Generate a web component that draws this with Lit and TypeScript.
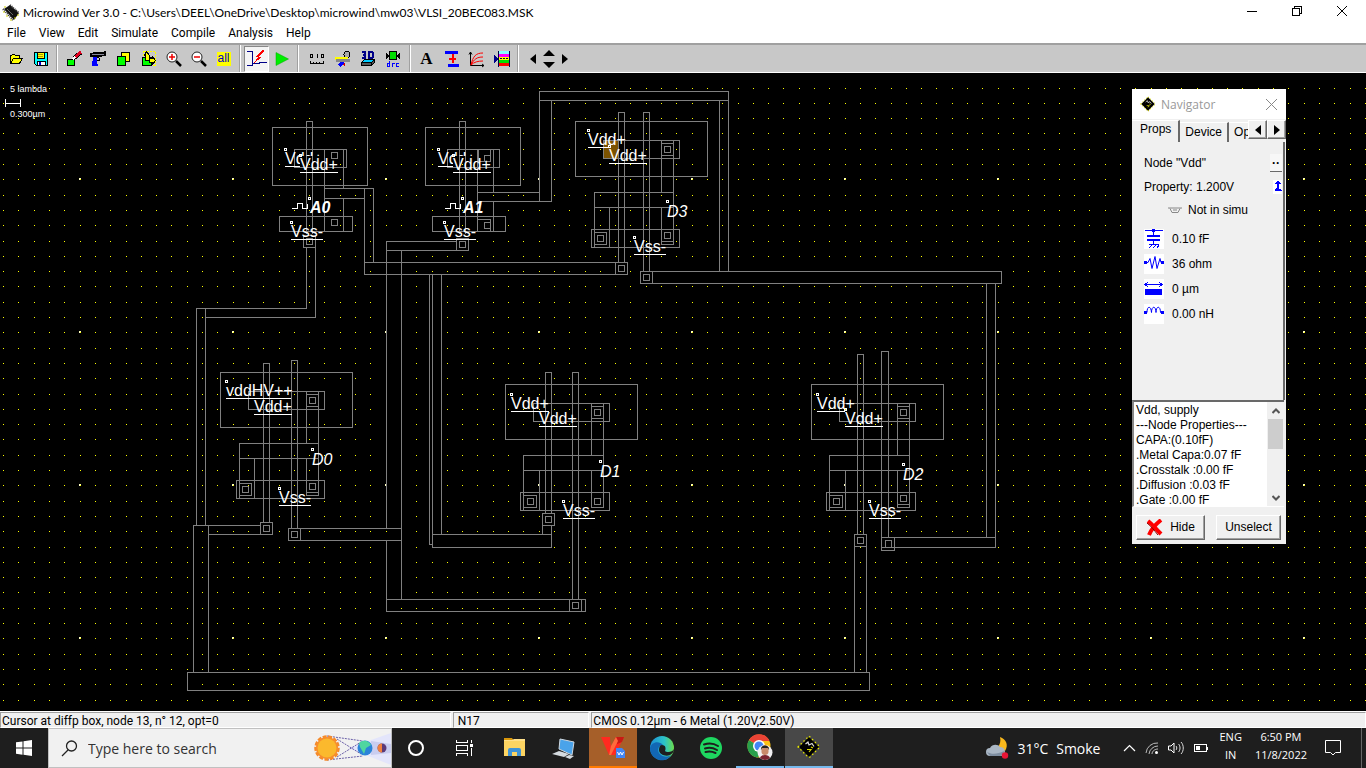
import { LitElement, html, svg, css, nothing } from "lit";
import { customElement, state } from "lit/decorators.js";
import { classMap } from "lit/directives/class-map.js";

/* ---------- layout data ---------- */

type Box = [number, number, number, number];

const boxPath = ([x, y, x2, y2]: Box) =>
  `M${x + 0.5} ${y + 0.5}H${x2 + 0.5}V${y2 + 0.5}H${x + 0.5}z`;
const h = (y: number, x: number, x2: number) => `M${x} ${y + 0.5}H${x2 + 1}`;
const v = (x: number, y: number, y2: number) => `M${x + 0.5} ${y}V${y2 + 1}`;

const inverter = (x: number, shift: number) => [
  boxPath([x, 127, x + 95, 185]),
  `M${x + 34.5} 234V121.5H${x + 40.5}V234`,
  boxPath([x + 22, 149, x + 74, 167]),
  boxPath([x + 59, 152 + shift, x + 65, 158 + shift]),
  v(x + 52, 149, 231),
  boxPath([x + 7, 216, x + 80, 231]),
  boxPath([x + 59, 219 + shift, x + 65, 225 + shift]),
];

const gate = (x: number, y: number, lift = 0, arm = 0) => [
  boxPath([x, y, x + 132, y + 55]),
  boxPath([x + 28, y + 19, x + 104, y + 37]),
  boxPath([x + 86, y + 22, x + 98, y + 34]),
  boxPath([x + 89, y + 25, x + 95, y + 31]),
  v(x + 86, y + 19, y + 71),
  v(x + 98, y + 19, y + 123),
  h(y + 71, x + 18 + arm, x + 98),
  h(y + 86, x + 18 + arm, x + 98),
  v(x + 18 + arm, y + 71, y + 126),
  v(x + 34, y + 86, y + 126),
  v(x + 86, y + 86, y + 123),
  boxPath([x + 15 + arm, y + 108, x + 104, y + 126]),
  boxPath([x + 18 + arm, y + 111, x + 31, y + 123]),
  boxPath([x + 22, y + 114, x + 28, y + 120]),
  h(y + 123, x + 86, x + 98),
  h(y + 123 - lift, x + 86, x + 98),
  boxPath([x + 89, y + 114 - lift, x + 95, y + 120 - lift]),
];

const column = (x: number, x2: number, top: number, bottom: number) =>
  `M${x + 0.5} ${bottom}V${top + 0.5}H${x2 + 0.5}V${bottom}`;

const via = (x: number, y: number) => [
  boxPath([x, y, x + 12, y + 12]),
  boxPath([x + 3, y + 3, x + 9, y + 9]),
];

const wires = [
  ...inverter(272, 0),
  v(343, 149, 188), v(343, 198, 231),
  ...inverter(425, 3),
  v(493, 149, 192), v(493, 201, 231),
  ...gate(575, 121, 3, 1), ...gate(220, 372, 3, 1), ...gate(505, 384), ...gate(811, 384, 3),
  boxPath([478, 149, 490, 161]), boxPath([477, 219, 490, 231]),
  column(618, 624, 112, 262), column(643, 649, 112, 271),
  column(263, 269, 363, 522), column(291, 297, 360, 528),
  column(545, 551, 372, 513), column(572, 578, 372, 599),
  column(857, 863, 354, 534), column(881, 888, 351, 537),
  ...via(303, 235), ...via(456, 238), ...via(615, 262), ...via(640, 271),
  ...via(260, 522), ...via(288, 528), ...via(542, 513), ...via(569, 599),
  ...via(854, 534), boxPath([881, 537, 894, 550]), boxPath([885, 540, 891, 547]),
  h(188, 324, 373), h(198, 324, 364), v(364, 188, 274), v(373, 188, 262),
  h(262, 364, 615), h(274, 364, 615),
  v(306, 247, 308), v(315, 247, 317), h(308, 196, 306), h(317, 205, 315),
  v(196, 308, 525), v(205, 308, 525),
  h(525, 193, 260), h(534, 208, 260), v(193, 525, 672), v(208, 525, 672),
  boxPath([187, 672, 869, 690]),
  h(192, 477, 539), h(201, 477, 551), v(539, 91, 201), v(551, 100, 201),
  h(91, 539, 728), h(100, 539, 728), v(719, 100, 271), v(728, 91, 271),
  h(241, 386, 456), h(250, 386, 456), v(401, 250, 599),
  v(386, 241, 528), v(386, 540, 611),
  h(528, 300, 401), h(540, 300, 401),
  h(599, 386, 585), h(611, 386, 585), v(585, 599, 611),
  v(429, 274, 544), h(544, 429, 432), v(432, 274, 547), v(441, 274, 534),
  h(534, 432, 551), h(547, 432, 551), v(542, 525, 534), v(551, 525, 547),
  h(271, 652, 1001), h(283, 652, 1001), v(1001, 271, 283),
  v(986, 283, 537), v(995, 283, 547), h(537, 894, 995), h(547, 881, 995),
  v(854, 546, 672), v(866, 546, 672),
].join("");

interface Label { x: number; y: number; text: string; w?: number; kind?: string; dot?: [number, number] }

const lowerLabels: Label[] = [
  { x: 285, y: 164, text: "Vdd+", w: 38, dot: [285, 149] },
  { x: 438, y: 164, text: "Vdd+", w: 38, dot: [438, 149] },
  { x: 588, y: 145, text: "Vdd+", w: 38, dot: [588, 130] },
  { x: 226, y: 396, text: "vddHV++", w: 65, dot: [226, 381] },
  { x: 511, y: 409, text: "Vdd+", w: 38, dot: [511, 394] },
  { x: 817, y: 409, text: "Vdd+", w: 38, dot: [817, 394] },
];
const covered: Box[] = [[300, 156, 338, 173], [453, 156, 491, 173], [609, 147, 647, 164], [845, 410, 883, 427]];
const openArea = "M0 0H2000V1200H0z" + covered.map(([x, y, x2, y2]) => `M${x} ${y}H${x2}V${y2}H${x}z`).join("");

const labels: Label[] = [
  { x: 300, y: 170, text: "Vdd+", w: 38, dot: [300, 155] },
  { x: 453, y: 170, text: "Vdd+", w: 38, dot: [453, 155] },
  { x: 609, y: 161, text: "Vdd+", w: 38, dot: [609, 146] },
  { x: 254, y: 412, text: "Vdd+", w: 38 },
  { x: 539, y: 424, text: "Vdd+", w: 38 },
  { x: 845, y: 424, text: "Vdd+", w: 38, dot: [845, 409] },
  { x: 291, y: 237, text: "Vss-", w: 32, dot: [291, 222] },
  { x: 444, y: 237, text: "Vss-", w: 32, dot: [444, 222] },
  { x: 634, y: 252, text: "Vss-", w: 32, dot: [634, 237] },
  { x: 279, y: 503, text: "Vss-", w: 32, dot: [279, 488] },
  { x: 563, y: 516, text: "Vss-", w: 32, dot: [563, 501] },
  { x: 869, y: 516, text: "Vss-", w: 32, dot: [869, 501] },
  { x: 310, y: 213, text: "A0", kind: "clock", dot: [309, 198] },
  { x: 463, y: 213, text: "A1", kind: "clock", dot: [462, 198] },
  { x: 667, y: 217, text: "D3", kind: "probe", dot: [667, 201] },
  { x: 312, y: 465, text: "D0", kind: "probe", dot: [312, 449] },
  { x: 600, y: 477, text: "D1", kind: "probe", dot: [600, 461] },
  { x: 903, y: 480, text: "D2", kind: "probe", dot: [903, 464] },
];

const gridDots = (() => {
  let minor = "";
  let major = "";
  for (let i = -15; i < 112; i++) {
    for (let j = -6; j < 60; j++) {
      const x = Math.round(232.65 + 15.3 * i);
      const y = Math.round(179.3 + 15.3 * j);
      minor += `M${x} ${y}h1v1h-1z`;
      if (i % 10 === 0 && j % 10 === 0) major += `M${x - 1} ${y - 1}h2v1h-1v1h-1z`;
    }
  }
  return { minor, major };
})();

/* ---------- icons ---------- */

const icon = (w: number, ht: number, body: unknown, crisp = true) => html`<svg
  class=${crisp ? "crisp" : "smooth"} width=${w} height=${ht} viewBox="0 0 ${w} ${ht}" aria-hidden="true">${body}</svg>`;

const chip = (size: number) => html`<svg width=${size} height=${size} viewBox="0 0 24 24" aria-hidden="true">
  <path d="M12 1.500 22.500 12 12 22.500 1.500 12z" fill="none" stroke="#e6e600" stroke-width="2" stroke-dasharray="1.500 2.500"/>
  <path d="M12 2 22 12 12 22 2 12z" fill="#000"/>
  <path d="M8.500 9 11 7l1 3 3-1.500 2 3" fill="none" stroke="#ddd" stroke-width="1.200"/>
  <path d="M10 14.500h4l-2 2.500M14 12l2 1" fill="none" stroke="#d8d800" stroke-width="1.200"/></svg>`;

const tool: Record<string, unknown> = {
  open: icon(16, 16, svg`<path d="M2.500 12.500v-8h1l1-1h2l1 1h4v3" fill="#ff0" stroke="#000"/><path d="M2.500 12.500 5.500 7.500h9l-3 5z" fill="#ff0" stroke="#000"/>`),
  save: icon(16, 16, svg`<path d="M1.500 1.500h13v13h-11l-2-2z" fill="#0ff" stroke="#000"/><path d="M4.500 1.500h7v6h-7z" fill="#ff0" stroke="#000"/><path d="M5 3h5v1H5zM5 5h5v1H5z" fill="#a90"/><path d="M4.500 10.500h8v4h-8z" fill="#fff" stroke="#000"/><path d="M6 11h2v3H6z" fill="#00c"/>`),
  draw: icon(16, 16, svg`<path d="M1.500 8.500h7v6h-7z" fill="#0f0" stroke="#000"/><path d="M8 7 15 1.500" stroke="#000" stroke-width="4"/><path d="M9.500 5.500 15 1" stroke="#e00020" stroke-width="3"/><path d="M6.500 8.500 9 6" stroke="#fff" stroke-width="2"/>`),
  gun: icon(18, 16, svg`<path d="M0 2h3V1h11V0h2v5h-4v1h-3v1H6v1H3V6H0z" fill="#000"/><path d="M2 3.500h12" stroke="#889"/><path d="M3 6h4v4l1 5H2z" fill="#00f"/><path d="M9.500 7v2.500H7" stroke="#000" fill="none"/>`),
  copy: icon(16, 16, svg`<path d="M5.500 1.500h8v9h-8z" fill="#ff0" stroke="#000"/><path d="M1.500 5.500h8v9h-8z" fill="#0f0" stroke="#000"/>`),
  stretch: icon(16, 16, svg`<path d="M2.500.500h12v14h-12z" fill="none" stroke="#ff0" stroke-dasharray="2 1"/><path d="M1.500 6.500h9v8h-9z" fill="#0f0" stroke="#000"/><path d="M3.500 4.500 5.500.500 8.500 4.500v5h-4v-5zM8.500 7.500h3v-2l3 4-3 4v-2h-3z" fill="#ff0" stroke="#000"/>`),
  zoomIn: icon(18, 18, svg`<circle cx="7" cy="7" r="5" fill="#fff" stroke="#222"/><path d="M4 7h6M7 4v6" stroke="#e00" stroke-width="1.500"/><path d="m11 11 5 5" stroke="#000" stroke-width="2.500"/>`, false),
  zoomOut: icon(18, 18, svg`<circle cx="7" cy="7" r="5" fill="#fff" stroke="#222"/><path d="M4 7h6" stroke="#e00" stroke-width="1.500"/><path d="m11 11 5 5" stroke="#000" stroke-width="2.500"/>`, false),
  mos: icon(20, 20, svg`<path d="M0 2.500h5v14H0M5 14.500h7v-1h8" stroke="#008" fill="none"/><path d="M16 1 8 8h3l-4 6 8-6h-3l5-6z" fill="#f00"/>`),
  play: icon(14, 14, svg`<path d="M1 .500 13.500 7 1 13.500z" fill="#0e0" stroke="#0a0" stroke-width=".5"/>`, false),
  ruler: icon(18, 12, svg`<path d="M1.500 1.500h2v3h-2zM8.500 1v4M7.500 1.500h1M12.500 1.500h2v3h-2zM1.500 8v2.500h13V8M4.500 9v1M7.500 9v1M10.500 9v1" stroke="#000" fill="none"/>`),
  cut: icon(16, 16, svg`<circle cx="12" cy="3.500" r="3" fill="#aaa" stroke="#000"/><path d="m6 11 4 3" stroke="#d00" stroke-width="2"/><path d="m4 15 4-4" stroke="#00f" stroke-width="3"/><path d="M0 6h13v3H0z" fill="#ff0"/><path d="M1 8h14v3H1z" fill="#888"/>`),
  d3: icon(16, 16, svg`<path d="M2 0h4v8H2V6h2V5H3V3h1V2H2zM8 0h4l2 2v4l-2 2H8zM10 2v4h1l1-1V3l-1-1z" fill="#008" fill-rule="evenodd"/><path d="M1.500 11.500 4.500 8.500h10l-3 3z" fill="#0cf" stroke="#000"/><path d="M1.500 11.500h10v3h-10zM11.500 11.500l3-3v3l-3 3z" fill="#555" stroke="#000"/>`),
  drc: icon(16, 18, svg`<path d="M4.500 1.500h7v8h-7z" fill="#0d0" stroke="#000"/><path d="M1 3l4 3-4 3zM15 3l-4 3 4 3z" fill="#000"/><path d="M2.500 13.500h2v3h-2zM4.500 11v6M7.500 17v-3.500h2M14 13.500h-2.500v3H14" fill="none" stroke="#00f"/>`),
  beam: icon(16, 16, svg`<path d="M1 0h13v3H1zM4 13h11v3H4z" fill="#00f"/><path d="M5 7.500h7M8.500 3v9" stroke="#f00" stroke-width="2"/>`),
  graph: icon(18, 18, svg`<path d="M2.500 2v13.500H16M1 4.500 2.500 2 4 4.500M14 14l2 1.500-2 1.500" fill="none" stroke="#000"/><path d="M3 15C5 6 8 3 15 3M3 15C6 9 9 7 15 7M3 15c3-3 7-4 12-4" fill="none" stroke="#f00"/>`, false),
  layers: icon(18, 16, svg`<path d="M6 0h10v3H6z" fill="#8ff"/><path d="M6 3h10v3H6z" fill="#f0f"/><path d="M6 6h10v3H6z" fill="#ff0"/><path d="M6 9h10v3H6z" fill="#0d0"/><path d="M6 12h10v3H6z" fill="#f00"/><path d="M5.500 0v16M16.500 0v16" stroke="#004"/><path d="M7 7.500h9" stroke="#004" stroke-dasharray="2 1"/><path d="m1 4 5 4-5 4z" fill="#008"/>`),
  left: icon(6, 10, svg`<path d="M6 0v10L0 5z"/>`, false),
  updown: icon(12, 20, svg`<path d="M0 7 6 1l6 6zM0 13h12l-6 6z"/>`, false),
  right: icon(6, 10, svg`<path d="M0 0v10l6-5z"/>`, false),
};

const prop: Record<string, unknown> = {
  cap: icon(20, 20, svg`<path d="M1 1.500h18M9.500 1v5M9.500 11v4M5 15.500h10M5 19l3-3M9 19l3-3M13 19l2-3" stroke="#00f" fill="none"/><path d="M3 6h13v2H3zM3 10h13v2H3zM8 0h3v3H8z" fill="#00f"/>`),
  res: icon(20, 20, svg`<path d="M1 8.500h3l2-4 2 10 3-12 2 12 3-10 1 4h3" stroke="#00f" fill="none"/><path d="M0 7h3v3H0zM17 7h3v3h-3z" fill="#00f"/>`, false),
  len: icon(20, 20, svg`<path d="M1 10h17v6H1z" fill="#00f"/><path d="M1 5.500h17M4 3 1 5.500 4 8M15 3l3 2.500L15 8" fill="none" stroke="#00f"/>`),
  ind: icon(20, 20, svg`<path d="M1 8.500h2c0-7 4-7 4.500 0 0-7 4.500-7 4.500 0 0-7 4.500-7 4.500 0h3" fill="none" stroke="#00f"/><path d="M0 7h3v3H0zM17 7h3v3h-3z" fill="#00f"/>`, false),
};

const app: Record<string, unknown> = {
  explorer: icon(24, 22, svg`<path d="M1 1h8l2 3H1z" fill="#d9970b"/><path d="M1 3h21v16H1z" fill="#fcd462"/><path d="M1 3h8l2-1h11v2H1z" fill="#ffe08a"/><path d="M5 19v-6a2 2 0 0 1 2-2h9a2 2 0 0 1 2 2v6h-4v-4H9v4z" fill="#3f93d6"/>`, false),
  pc: icon(26, 24, svg`<path d="m9 3 14 3-2 13-13-6z" fill="#4aa3ea" stroke="#cfd8e0"/><path d="m1 18 7-3 10 3-5 3zM14 21l4-2 5 1-4 3z" fill="#d5dbe0"/>`, false),
  wps: icon(28, 26, svg`<path d="M2 3h9l1 9 5-9h8l-9 18h-6z" fill="#ff2a20"/><path d="M11 3h3l1 5-3 5z" fill="#a65f29"/><path d="M17 3h8l-2 5-5 2z" fill="#c81a14"/><path d="M12 12 17 3l2 4-7 14h-2z" fill="#ff6a3c"/><path d="M17 14h6l3 3v7h-9z" fill="#4285f4"/><path d="m18.500 18 1.500 3 1.500-3 1.500 3 1.500-3" stroke="#fff" fill="none"/>`, false),
  edge: icon(26, 26, svg`<defs><linearGradient id="eg" x1="0" x2="1"><stop offset="0" stop-color="#1c8fd8"/><stop offset=".6" stop-color="#2cc3c8"/><stop offset="1" stop-color="#6bdc4c"/></linearGradient></defs><circle cx="13" cy="13" r="12" fill="url(#eg)"/><path d="M1 13c1-6 9-8 13-3-4 0-6 4-4 8 2 3 7 5 12 2-3 5-8 6-12 5C4 23 1 18 1 13z" fill="#1267b4"/><path d="M13 10c4 0 4 4 3 6 2 2 8 1 9-2 0 3-2 5-4 6-5 2-11-1-11-5 0-3 1-5 3-5z" fill="#1e1e1e"/>`, false),
  spotify: icon(24, 24, svg`<circle cx="12" cy="12" r="11" fill="#1ed760"/><path d="M5 8.500c5-1.500 10-1 14 1.500M6 12.500c4-1.300 8-.8 12 1.500M6.500 16c4-1 7-.5 10 1" fill="none" stroke="#1e1e1e" stroke-width="2" stroke-linecap="round"/>`, false),
  chrome: icon(28, 28, svg`<circle cx="13" cy="13" r="11.500" fill="#fbc116"/><path d="m13 13-10-6a11.500 11.500 0 0 0 9 17.500l5-9z" fill="#28a04c"/><path d="M3 7a11.500 11.500 0 0 1 20.500 1H13v5z" fill="#ea4335"/><circle cx="13" cy="13" r="6" fill="#fff"/><circle cx="13" cy="13" r="4.500" fill="#4285f4"/><circle cx="19" cy="19.500" r="7.500" fill="#f0eff1"/><path d="M15.500 16c0-5 7-5 7 0v3c0 4-7 4-7 0z" fill="#c98a6b"/><path d="M15 17c-1-6 9-6 8 0l-1-2h-6z" fill="#222"/><path d="M14 25c1-4 9-4 10 0-3 2.500-7 2.500-10 0z" fill="#7c2430"/>`, false),
};

/* ---------- layout canvas ---------- */

@customElement("layout-view")
class LayoutView extends LitElement {
  static styles = css`
    :host { display: block; overflow: hidden; background: #000; }
    svg { display: block; width: 100%; height: 100%; }
    .wires { fill: none; stroke: #808080; shape-rendering: crispEdges; }
    .crisp { shape-rendering: crispEdges; }
    .label { font: 16px "Liberation Sans", Arial, sans-serif; fill: #fff; }
    .probe { font-style: italic; }
    .clock { font-style: italic; font-weight: bold; }
    .scale { font: 9px "Liberation Sans", Arial, sans-serif; fill: #fff; }
    .line { fill: none; stroke: #fff; shape-rendering: crispEdges; }
  `;

  private label(l: Label) {
    return svg`<text class="label ${l.kind ?? ""}" x=${l.x} y=${l.y}>${l.text}</text>
      ${l.w ? svg`<path class="line" d="M${l.x} ${l.y + 2.5}h${l.w}"/>` : nothing}
      ${l.dot ? svg`<path class="line" d="M${l.dot[0] - 0.5} ${l.dot[1] - 0.5}h2v2h-2z"/>` : nothing}
      ${l.kind === "clock" ? svg`<path class="line" d="M${l.x - 18} 208.500h5v-5h5v5h5v-5"/>` : nothing}`;
  }

  render() {
    return html`<svg role="img" aria-label="Chip layout">
      <defs><clipPath id="open"><path clip-rule="evenodd" d=${openArea}/></clipPath></defs>
      <g transform="translate(0 -73)">
        <path class="crisp" d=${gridDots.minor} fill="#ff0"/>
        <path class="crisp" d=${gridDots.major} fill="#ffffc0"/>
        <rect x="603" y="140" width="15" height="18" fill="#7b5200"/>
        <path class="wires" d=${wires}/>
        <g clip-path="url(#open)">${lowerLabels.map((l) => this.label(l))}</g>
        ${labels.map((l) => this.label(l))}
        <text class="scale" x="10" y="92">5 lambda</text>
        <path class="line" d="M5.500 99v8M20.500 99v8M5 103.500h16"/>
        <text class="scale" x="10" y="117">0.300µm</text>
      </g>
    </svg>`;
  }
}

/* ---------- navigator window ---------- */

@customElement("navigator-window")
class NavigatorWindow extends LitElement {
  @state() private tab = "Props";

  static styles = css`
    :host { display: flex; flex-direction: column; width: 154px; height: 455px; box-sizing: border-box;
      background: #f0f0f0; color: #000; font: 12px/15px "Liberation Sans", Arial, sans-serif; }
    button { font: inherit; color: inherit; margin: 0; padding: 0; border: 0; background: none; }
    svg { display: block; flex: none; }
    .smooth { shape-rendering: geometricPrecision; }
    .crisp { shape-rendering: crispEdges; }
    .title { display: flex; align-items: center; height: 30px; padding: 0 9px 0 8px; gap: 5px; background: #fff;
      color: #999; font: 12px "Open Sans", "Noto Sans", sans-serif; }
    .title span { flex: 1; }
    .tabs { display: flex; align-items: flex-end; height: 23px; }
    .tab { height: 20px; padding: 0 5px; border-right: 2px solid #696969; border-top: 1px solid #fff; }
    .tab.on { height: 22px; padding: 0 7px 4px 8px; }
    .tab.cut { flex: 1; overflow: hidden; border-right: 0; text-align: left; }
    .step { display: grid; place-items: center; width: 19px; height: 19px; align-self: flex-start; margin-top: 1px; }
    .raised { border: 1px solid; border-color: #fff #696969 #696969 #fff; box-shadow: inset -1px -1px #a0a0a0; }
    .body { flex: 1; border-right: 2px solid #696969; margin-right: 1px; padding: 9px 1px 0 12px; }
    .row { display: flex; align-items: center; justify-content: space-between; height: 24px; }
    .more { width: 12px; height: 18px; font-weight: bold; line-height: 10px; background: #f7f7f7; border-bottom: 1px solid #696969; }
    .simu { display: flex; align-items: center; gap: 6px; height: 22px; padding-left: 24px; }
    .props { display: grid; grid-template-columns: 20px 1fr; column-gap: 8px; row-gap: 5px; align-items: center; margin: 8px 0 0; }
    .props dt { background: #fff; }
    .props dd { margin: 0; }
    .report { display: flex; height: 107px; box-sizing: border-box; border-top: 2px solid #696969; border-left: 2px solid #888; border-bottom: 1px solid #fff; background: #fff; margin-right: 2px; }
    .report ul { flex: 1; margin: 0; padding: 1px 0 0 2px; list-style: none; overflow: hidden; white-space: nowrap; }
    .bar { display: flex; flex-direction: column; width: 17px; background: #f0f0f0; }
    .arrow { display: grid; place-items: center; height: 17px; }
    .thumb { height: 30px; margin: 0 1px; background: #cdcdcd; }
    .space { flex: 1; }
    .actions { display: flex; justify-content: space-between; padding: 8px 5px 4px 4px; }
    .action { display: flex; align-items: center; justify-content: center; gap: 7px; height: 25px; width: 69px; border-width: 1px; }
    .action.plain { width: 65px; }
  `;

  render() {
    const lines = ["Vdd, supply", "---Node Properties---", "CAPA:(0.10fF)", ".Metal Capa:0.07 fF", ".Crosstalk :0.00 fF", ".Diffusion :0.03 fF", ".Gate :0.00 fF"];
    return html`
      <div class="title">${chip(16)}<span>Navigator</span>
        <button aria-label="Close">${icon(11, 11, svg`<path d="M0 0 11 11M11 0 0 11" stroke="#888"/>`, false)}</button></div>
      <div class="tabs">
        ${["Props", "Device", "Options"].map((t) => html`<button
          class=${classMap({ tab: true, on: this.tab === t, cut: t === "Options" })}
          @click=${() => (this.tab = t)}>${t}</button>`)}
        <button class="step raised" aria-label="Previous tabs">${tool.left}</button>
        <button class="step raised" aria-label="Next tabs">${tool.right}</button>
      </div>
      <div class="body">
        <div class="row"><span>Node "Vdd"</span><button class="more" aria-label="More">··</button></div>
        <div class="row"><span>Property: 1.200V</span>${icon(9, 14, svg`<path d="M0 0h9v14H0z" fill="#fff"/><path d="m5 1 4 3H6v5h2l1 2H2l-1-1 2-2h1V4H1z" fill="#00f"/>`)}</div>
        <div class="simu">${icon(14, 7, svg`<path d="M0 1h14M2 1.500 4 5.500h6l2-4M5 3h4" stroke="#888" fill="none"/>`, false)}<span>Not in simu</span></div>
        <dl class="props">
          <dt>${prop.cap}</dt><dd>0.10 fF</dd>
          <dt>${prop.res}</dt><dd>36 ohm</dd>
          <dt>${prop.len}</dt><dd>0 µm</dd>
          <dt>${prop.ind}</dt><dd>0.00 nH</dd>
        </dl>
      </div>
      <div class="report">
        <ul>${lines.map((l) => html`<li>${l}</li>`)}</ul>
        <div class="bar">
          <button class="arrow" aria-label="Scroll up">${icon(8, 6, svg`<path d="m.5 5 3.500-3.500L7.500 5" fill="none" stroke="#555" stroke-width="2"/>`, false)}</button>
          <div class="thumb"></div><div class="space"></div>
          <button class="arrow" aria-label="Scroll down">${icon(8, 6, svg`<path d="M.5 1 4 4.500 7.500 1" fill="none" stroke="#555" stroke-width="2"/>`, false)}</button>
        </div>
      </div>
      <div class="actions">
        <button class="action raised">${icon(17, 17, svg`<path d="M2 2c4 3 8 8 13 13M15 1C10 5 5 11 3 16" stroke="#f00" stroke-width="4" fill="none"/><path d="M1 4c4 3 7 7 11 12" stroke="#800" fill="none"/>`, false)}Hide</button>
        <button class="action plain raised">Unselect</button>
      </div>`;
  }
}

/* ---------- desktop ---------- */

@customElement("app-root")
class AppRoot extends LitElement {
  static styles = css`
    :host { display: flex; flex-direction: column; height: 100vh; overflow: hidden; background: #fff; color: #000;
      font: 12px Roboto, "Noto Sans", sans-serif; }
    button { font: inherit; color: inherit; margin: 0; padding: 0; border: 0; background: none; display: grid; place-items: center; }
    svg { display: block; flex: none; }
    .crisp { shape-rendering: crispEdges; }
    .title { display: flex; align-items: center; height: 24px; padding: 0 2px; }
    .title h1 { flex: 1; margin: 0 0 0 4px; font: 12px Lato, "Noto Sans", sans-serif; }
    .win { width: 45px; height: 24px; padding-bottom: 3px; }
    .menu { display: flex; height: 19px; padding: 0 7px 2px; gap: 13px; box-sizing: border-box; }
    .toolbar { display: flex; align-items: stretch; height: 30px; box-sizing: border-box; padding-left: 1px; background: #c8c8c8; border-top: 2px solid #a0a0a0; border-bottom: 1px solid #fff; }
    .group { display: flex; align-items: center; padding: 0 4px 0 2px; border-right: 1px solid #fff; box-shadow: inset -1px 0 #a0a0a0; margin-right: 1px; }
    .group.wide { padding: 0 5px; }
    .group:last-child { border: 0; box-shadow: none; }
    .tool { width: 25px; height: 26px; }
    .tool.slim { width: 16px; }
    .pressed { background: #f4f4f4; border: 1px solid; border-color: #888 #fff #fff #888; box-sizing: border-box; }
    .all { width: 14px; height: 14px; background: #ff0; color: #00c; font: 12px/13px "Liberation Sans", Arial, sans-serif; }
    .letter { font: bold 17px/20px "Liberation Serif", serif; }
    .stage { flex: 1; min-height: 0; position: relative; display: grid; grid-template: minmax(0, 1fr) / minmax(0, 1fr); }
    .nav { position: absolute; top: 16px; right: 80px; }
    .status { display: flex; gap: 2px; height: 17px; background: #f0f0f0; border-top: 1px solid #fff; box-sizing: border-box; white-space: nowrap; }
    .cell { flex: none; box-sizing: border-box; padding: 0 1px; border: 1px solid; border-color: #a0a0a0 #fff #fff #a0a0a0; line-height: 16px; }
    .cursor { width: 33%; }
    .node { width: 10%; padding-left: 4px; }
    .tech { flex: 1; }
    .taskbar { display: flex; align-items: stretch; height: 40px; background: #1e1e1e; color: #fff; }
    .start, .app { width: 48px; box-sizing: border-box; }
    .search { display: flex; align-items: center; width: 344px; box-sizing: border-box; padding-left: 12px; gap: 10px; background: #f1f1f1; border: 1px solid #c0c0c0; color: #222; }
    .search input { flex: 1; min-width: 0; border: 0; padding: 0; background: none; outline: 0; font: 14px "Open Sans", "Noto Sans", sans-serif; color: #222; }
    .search input::placeholder { color: #333; opacity: 1; }
    .apps { display: flex; gap: 1px; margin-left: 3px; }
    .app.hot { background: #a65f29; border-bottom: 2px solid #ff7a00; }
    .app.running { border-bottom: 2px solid #76b9ed; }
    .app.active { background: #484848; }
    .grow { flex: 1; }
    .weather { display: flex; align-items: center; gap: 8px; font: 14px "Open Sans", "Noto Sans", sans-serif; margin-right: 23px; }
    .tray { display: flex; align-items: center; gap: 9px; }
    .stack { text-align: center; font: 11px/18px "Open Sans", "Noto Sans", sans-serif; }
    .lang { margin-left: 10px; }
    .clock { margin-left: 13px; }
    .notes { margin: 0 20px 0 18px; }
    .peek { width: 5px; border-left: 1px solid #666; box-sizing: border-box; }
  `;

  private tools(names: string[], wide = false) {
    return html`<div class=${classMap({ group: true, wide })}>
      ${names.map((n) => html`<button aria-label=${n}
        class=${classMap({ tool: true, pressed: n === "mos", slim: ["left", "updown", "right"].includes(n) })}>
        ${n === "all" ? html`<span class="all">all</span>` : n === "text" ? html`<span class="letter">A</span>` : tool[n]}
      </button>`)}</div>`;
  }

  render() {
    return html`
      <header class="title">
        ${icon(17, 17, svg`<path d="m2 5 6-4 9 8-5 7z" fill="#111"/><path d="m1 5 10 11M8 1l9 8" stroke="#333" stroke-width="2" stroke-dasharray="1 1"/><path d="M2 7v2M5 11v2M9 15v2M13 13v2M16 10v2M3 2v2" stroke="#cc0"/><path d="m5 5 6 6" stroke="#666"/>`, false)}
        <h1>Microwind Ver 3.0 - C:\\Users\\DEEL\\OneDrive\\Desktop\\microwind\\mw03\\VLSI_20BEC083.MSK</h1>
        <button class="win" aria-label="Minimize">${icon(10, 10, svg`<path d="M0 5.500h10" stroke="#000"/>`)}</button>
        <button class="win" aria-label="Restore">${icon(10, 10, svg`<path d="M.5 2.500h7v7h-7zM2.500 2.500v-2h7v7h-2" fill="none" stroke="#000"/>`)}</button>
        <button class="win" aria-label="Close">${icon(10, 10, svg`<path d="m0 0 10 10M10 0 0 10" stroke="#000"/>`, false)}</button>
      </header>
      <nav class="menu">
        ${["File", "View", "Edit", "Simulate", "Compile", "Analysis", "Help"].map((m) => html`<button>${m}</button>`)}
      </nav>
      <div class="toolbar">
        ${this.tools(["open", "save"])}
        ${this.tools(["draw", "gun", "copy", "stretch", "zoomIn", "zoomOut", "all"])}
        ${this.tools(["mos", "play"])}
        ${this.tools(["ruler", "cut", "d3", "drc"], true)}
        ${this.tools(["text", "beam", "graph", "layers"])}
        ${this.tools(["left", "updown", "right"], true)}
      </div>
      <main class="stage">
        <layout-view></layout-view>
        <navigator-window class="nav"></navigator-window>
      </main>
      <div class="status">
        <div class="cell cursor">Cursor at diffp box, node 13, n° 12, opt=0</div>
        <div class="cell node">N17</div>
        <div class="cell tech">CMOS 0.12µm - 6 Metal (1.20V,2.50V)</div>
      </div>
      <footer class="taskbar">
        <button class="start" aria-label="Start">${icon(16, 16, svg`<path d="M0 2.300 6.500 1.400v6.200H0zM7.500 1.200 16 0v7.600H7.500zM0 8.500h6.500v6.200L0 13.800zM7.500 8.500H16V16l-8.500-1.200z" fill="#fff"/>`, false)}</button>
        <label class="search">
          ${icon(17, 17, svg`<circle cx="10.500" cy="6" r="5" fill="none" stroke="#222" stroke-width="1.300"/><path d="m7 10-6 6" stroke="#222" stroke-width="1.300"/>`, false)}
          <input type="text" placeholder="Type here to search" aria-label="Search">
          ${icon(78, 38, svg`<path d="M35 19 78 4v32z" fill="#e3e5fb"/><path d="M58 12l20 3v9l-20 2z" fill="#c9cdf0"/><path d="m14 7 36 5M14 31l36-4M24 10l24 15M24 28l24-15" stroke="#6a5fa8" stroke-dasharray="2 1" fill="none"/><circle cx="14" cy="19" r="11.500" fill="none" stroke="#f58a2b" stroke-width="2.500" stroke-dasharray="4 1.500"/><circle cx="14" cy="19" r="11" fill="#f78e2c"/><circle cx="14" cy="19" r="9.500" fill="#fbb92d"/><circle cx="52" cy="19" r="7.500" fill="#2b84d8"/><path d="M46 14c5-4 10-2 12 2l-5 3-2 6-4-7z" fill="#4fd6a0"/><circle cx="69" cy="19" r="4.500" fill="#5c3a78"/><path d="M69 14.500a4.500 4.500 0 0 0 0 9z" fill="#f0813e"/>`, false)}
        </label>
        <button class="app" aria-label="Cortana">${icon(18, 18, svg`<circle cx="9" cy="9" r="7" fill="none" stroke="#fff" stroke-width="2"/>`, false)}</button>
        <button class="app" aria-label="Task view">${icon(17, 16, svg`<path d="M.5 0v2.500h11V0M.5 16v-2.500h11V16M.5 5.500h11v5H.5zM15.500 0v3M15.500 8v8" fill="none" stroke="#fff"/><path d="M14 4h3v3h-3z" fill="#fff"/>`)}</button>
        <div class="apps">
          <button class="app" aria-label="File Explorer">${app.explorer}</button>
          <button class="app" aria-label="Remote PC">${app.pc}</button>
          <button class="app hot" aria-label="WPS Office">${app.wps}</button>
          <button class="app" aria-label="Edge">${app.edge}</button>
          <button class="app" aria-label="Spotify">${app.spotify}</button>
          <button class="app running" aria-label="Chrome">${app.chrome}</button>
          <button class="app running active" aria-label="Microwind">${chip(24)}</button>
        </div>
        <div class="grow"></div>
        <div class="weather">
          ${icon(23, 22, svg`<path d="M14 0c6 2 9 8 5 14l-7-4c2-3 3-6 2-10z" fill="#f9b81c"/><path d="M4 19a4 4 0 0 1 0-8c2-4 8-4 10-1 5 0 6 5 4 9z" fill="#a9b6c4"/><path d="M1 15c5 3 11 2 17-1-1 5-3 5-5 5H4z" fill="#7d8da0"/><circle cx="19" cy="18.500" r="3.200" fill="#e81535"/>`, false)}
          <span>31°C</span><span>Smoke</span>
        </div>
        <div class="tray">
          ${icon(13, 8, svg`<path d="m1 7 5.500-5.500L12 7" fill="none" stroke="#fff" stroke-width="1.200"/>`, false)}
          ${icon(14, 14, svg`<path d="M1 12A11 11 0 0 1 13 2M4 13a9 9 0 0 1 9-8M7 13c0-3 3-5 6-5" fill="none" stroke="#bbb"/><circle cx="11.500" cy="11.500" r="1.500" fill="#fff"/>`, false)}
          ${icon(17, 14, svg`<path d="M.5 5h2.500l3-3v10l-3-3H.5z" fill="none" stroke="#fff"/><path d="M8 5c1 1 1 3 0 4M10.500 3c2 2 2 6 0 8M13 1c3 3 3 9 0 12" fill="none" stroke="#ddd"/>`, false)}
          ${icon(15, 10, svg`<path d="M.5 1.500h12v7H.5zM13.500 4v3" fill="none" stroke="#fff"/><path d="M2 3h4v4H2z" fill="#fff"/>`)}
        </div>
        <div class="stack lang">ENG<br>IN</div>
        <div class="stack clock">6:50 PM<br>11/8/2022</div>
        <button class="notes" aria-label="Notifications">${icon(16, 16, svg`<path d="M.5.500h15v12h-5L8 15l-2.500-2.500h-5z" fill="none" stroke="#fff"/>`, false)}</button>
        <div class="peek"></div>
      </footer>`;
  }
}
